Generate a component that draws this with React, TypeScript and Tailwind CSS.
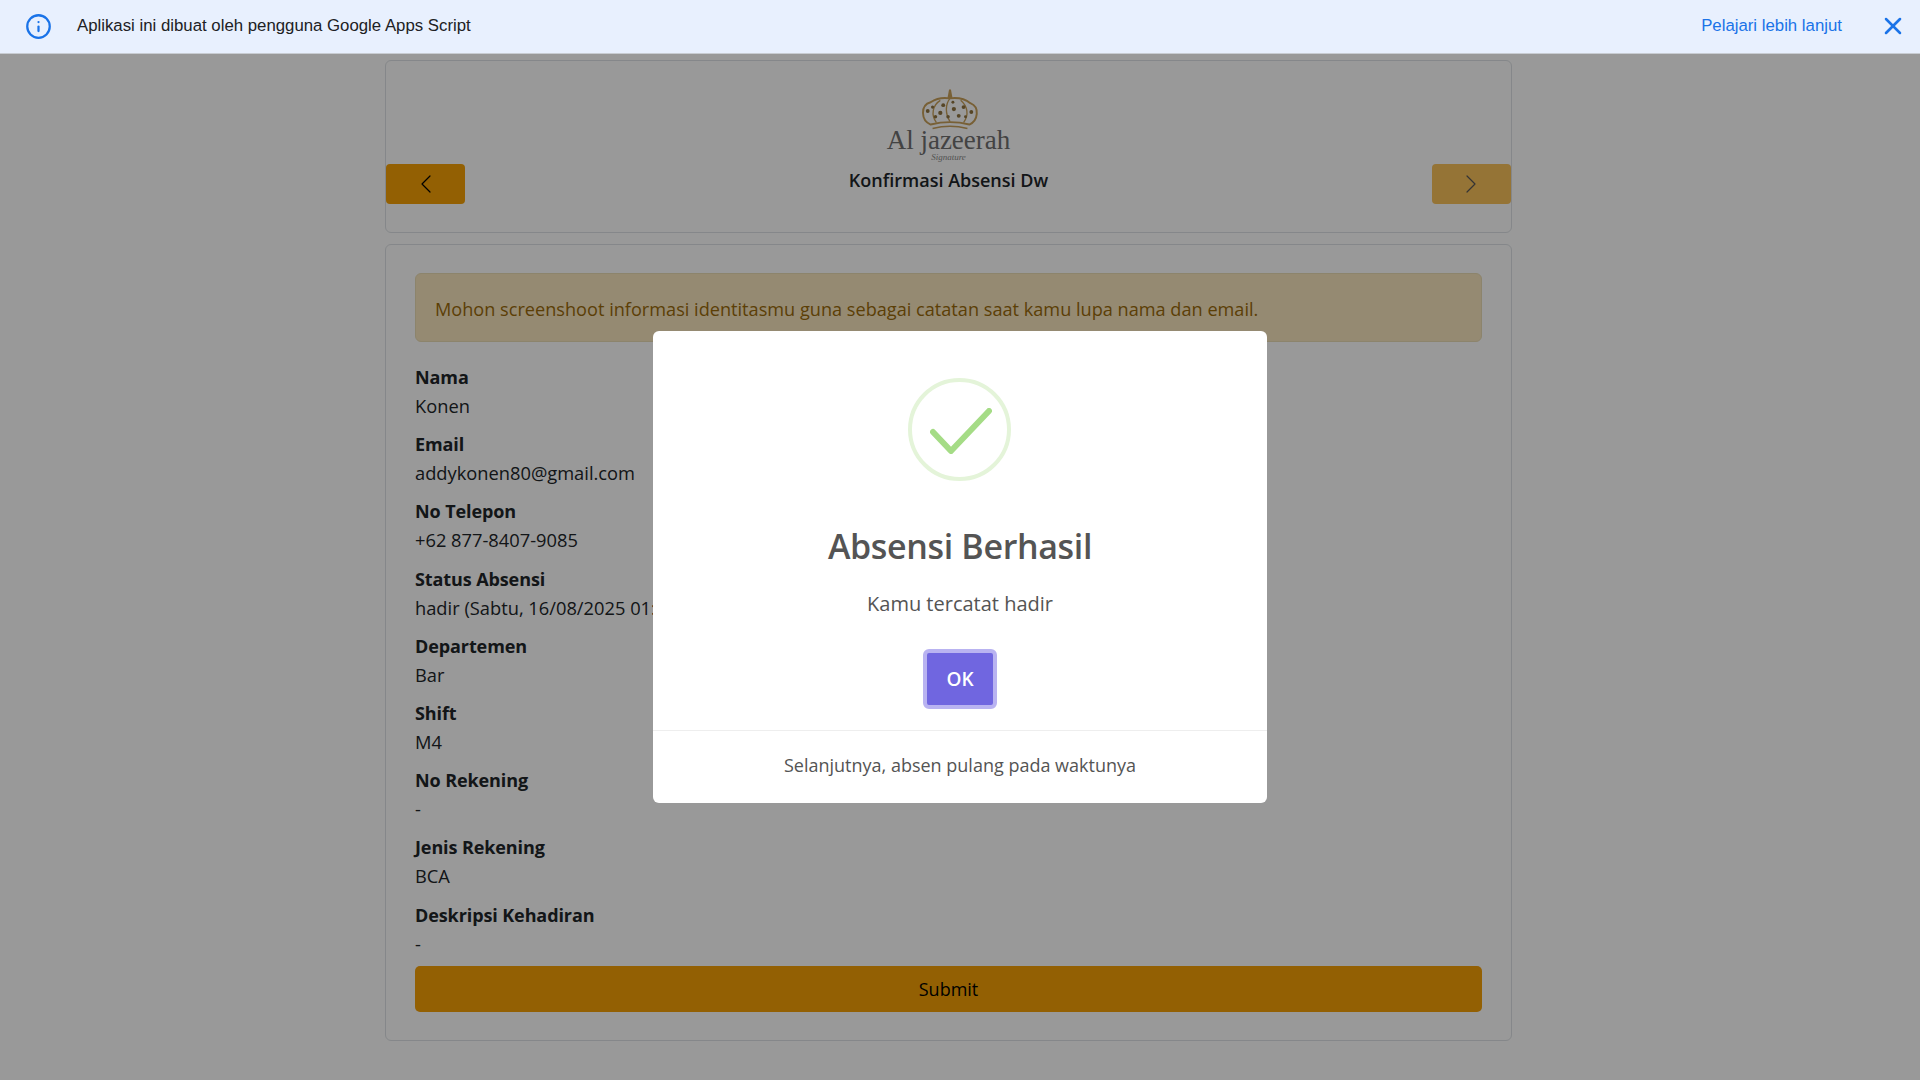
import { ChevronLeft, ChevronRight, Info, X } from "lucide-react";

const fields = [
  { label: "Nama", value: "Konen" },
  { label: "Email", value: "addykonen80@gmail.com" },
  { label: "No Telepon", value: "+62 877-8407-9085" },
  { label: "Status Absensi", value: "hadir (Sabtu, 16/08/2025 01:30:12)" },
  { label: "Departemen", value: "Bar" },
  { label: "Shift", value: "M4" },
  { label: "No Rekening", value: "-" },
  { label: "Jenis Rekening", value: "BCA" },
  { label: "Deskripsi Kehadiran", value: "-" },
];

const Logo = () => (
  <div className="flex h-[76px] w-[130px] flex-col items-center">
    <svg className="ml-[3px] mt-[1px]" width="62" height="42" viewBox="0 0 64 42" fill="none" stroke="#c9a15a" strokeWidth="2">
      <path d="M32 0 L33.5 8 L30.5 8 Z" fill="#c9a15a" />
      <path d="M12 36 C2 32 1 16 12 13 C18 9 26 8 32 9 C40 8 48 10 53 14 C63 18 61 32 52 36 C40 33 24 33 12 36 Z" />
      <path d="M18 34 C12 26 14 16 22 11 M32 33 C27 25 27 15 32 9 M46 34 C52 26 50 17 43 11" strokeWidth="1.4" />
      <path d="M14 40 C26 37 38 37 50 40" strokeWidth="1.6" />
      <g stroke="none" fill="#8f7440">
        <circle cx="9" cy="22" r="2" /><circle cx="14" cy="18" r="1.6" /><circle cx="22" cy="24" r="2.2" />
        <circle cx="25" cy="16" r="2" /><circle cx="36" cy="20" r="2.2" /><circle cx="41" cy="27" r="2" />
        <circle cx="46" cy="18" r="2" /><circle cx="54" cy="23" r="2" /><circle cx="17" cy="28" r="1.8" />
        <circle cx="30" cy="28" r="1.8" /><circle cx="35" cy="13" r="1.5" /><circle cx="48" cy="28" r="1.5" />
      </g>
    </svg>
    <span className="mt-[-3px] whitespace-nowrap font-['Liberation_Serif',serif] text-[27px] leading-[24px] text-[#707070]">Al jazeerah</span>
    <span className="mt-[1px] whitespace-nowrap font-['Liberation_Serif',serif] text-[9px] italic leading-[9px] text-[#8a8a8a]">Signature</span>
  </div>
);

export default function App() {
  return (
    <div className="relative h-[1080px] overflow-hidden bg-white font-['Open_Sans',sans-serif] text-[#212529]">
      {/* banner */}
      <div className="relative z-20 flex h-[54px] items-start border-b border-[#c8ccd2] bg-[#e8f0fe] font-['Liberation_Sans',sans-serif]">
        <Info className="ml-[25px] mt-[13px] text-[#1a73e8]" size={27} strokeWidth={2} />
        <span className="ml-[25px] mt-[15px] text-[16.8px] leading-[22px] text-[#202124]">Aplikasi ini dibuat oleh pengguna Google Apps Script</span>
        <span className="ml-auto mt-[15px] text-[16.8px] leading-[22px] text-[#1a73e8]">Pelajari lebih lanjut</span>
        <X className="ml-[37px] mr-[13px] mt-[12px] text-[#1a73e8]" size={28} strokeWidth={2.2} />
      </div>

      <div className="ml-[385px] mt-[6px] flex w-[1127px] flex-col gap-[11px]">
        {/* header card */}
        <div className="flex h-[173px] items-start justify-between rounded-[6px] border border-[#dee2e6]">
          <button className="mt-[103px] flex h-[40px] w-[79px] items-center justify-center rounded-[4px] bg-[#f5a005] text-black">
            <ChevronLeft size={32} strokeWidth={0.9} />
          </button>
          <div className="mt-[27px] flex flex-col items-center">
            <Logo />
            <h1 className="mt-[4px] text-[18px] font-semibold leading-[24px]">Konfirmasi Absensi Dw</h1>
          </div>
          <button className="mt-[103px] flex h-[40px] w-[79px] items-center justify-center rounded-[4px] bg-[#f5a005] text-black opacity-65">
            <ChevronRight size={32} strokeWidth={0.9} />
          </button>
        </div>

        {/* detail card */}
        <div className="flex h-[797px] flex-col rounded-[6px] border border-[#dee2e6] px-[29px] pt-[28px]">
          <div className="flex h-[69px] items-center rounded-[6px] border border-[#eadcb4] bg-[#f8e6bf] px-[19px] pt-[4px] text-[18.15px] text-[#9a6a0a]">
            Mohon screenshoot informasi identitasmu guna sebagai catatan saat kamu lupa nama dan email.
          </div>
          <div className="mt-[21px] flex flex-col">
            {fields.map((f) => (
              <div key={f.label} className="h-[67.2px]">
                <div className="text-[18px] font-bold leading-[28px] tracking-[-0.1px]">{f.label}</div>
                <div className="whitespace-nowrap text-[18.3px] leading-[29px]">{f.value}</div>
              </div>
            ))}
          </div>
          <button className="mt-[-1.5px] h-[46px] rounded-[5px] bg-[#f5a005] pt-[1px] text-[18px] text-black">Submit</button>
        </div>
      </div>

      {/* swal overlay */}
      <div className="absolute inset-x-0 bottom-0 top-[54px] z-10 flex items-start justify-center bg-black/40">
        <div className="mt-[277px] flex h-[472px] w-[614px] flex-col items-center rounded-[6px] bg-white text-[#545454]">
          <div className="mr-[2px] mt-[47px] flex h-[103px] w-[103px] items-center justify-center rounded-full border-[4px] border-[#e4f4d9]">
            <svg className="ml-[4px] mt-[3px]" width="62" height="46" viewBox="0 0 62 46" fill="none" stroke="#a5dc86" strokeWidth="6" strokeLinecap="round" strokeLinejoin="round">
              <path d="M3 24 L21 43 L59 3" />
            </svg>
          </div>
          <h2 className="mt-[40px] text-[34px] font-semibold leading-[50px] tracking-[-0.35px]">Absensi Berhasil</h2>
          <p className="mt-[18px] text-[20px] leading-[30px]">Kamu tercatat hadir</p>
          <button className="mt-[30px] flex h-[60px] w-[74px] items-center justify-center rounded-[6px] border-[4px] border-[#b9b3f1] bg-[#7066e0] text-[19px] font-semibold text-white">
            OK
          </button>
          <div className="mt-[21px] w-full border-t border-[#eeeeee] pt-[20px] text-center text-[18px] leading-[28px]">
            Selanjutnya, absen pulang pada waktunya
          </div>
        </div>
      </div>
    </div>
  );
}
